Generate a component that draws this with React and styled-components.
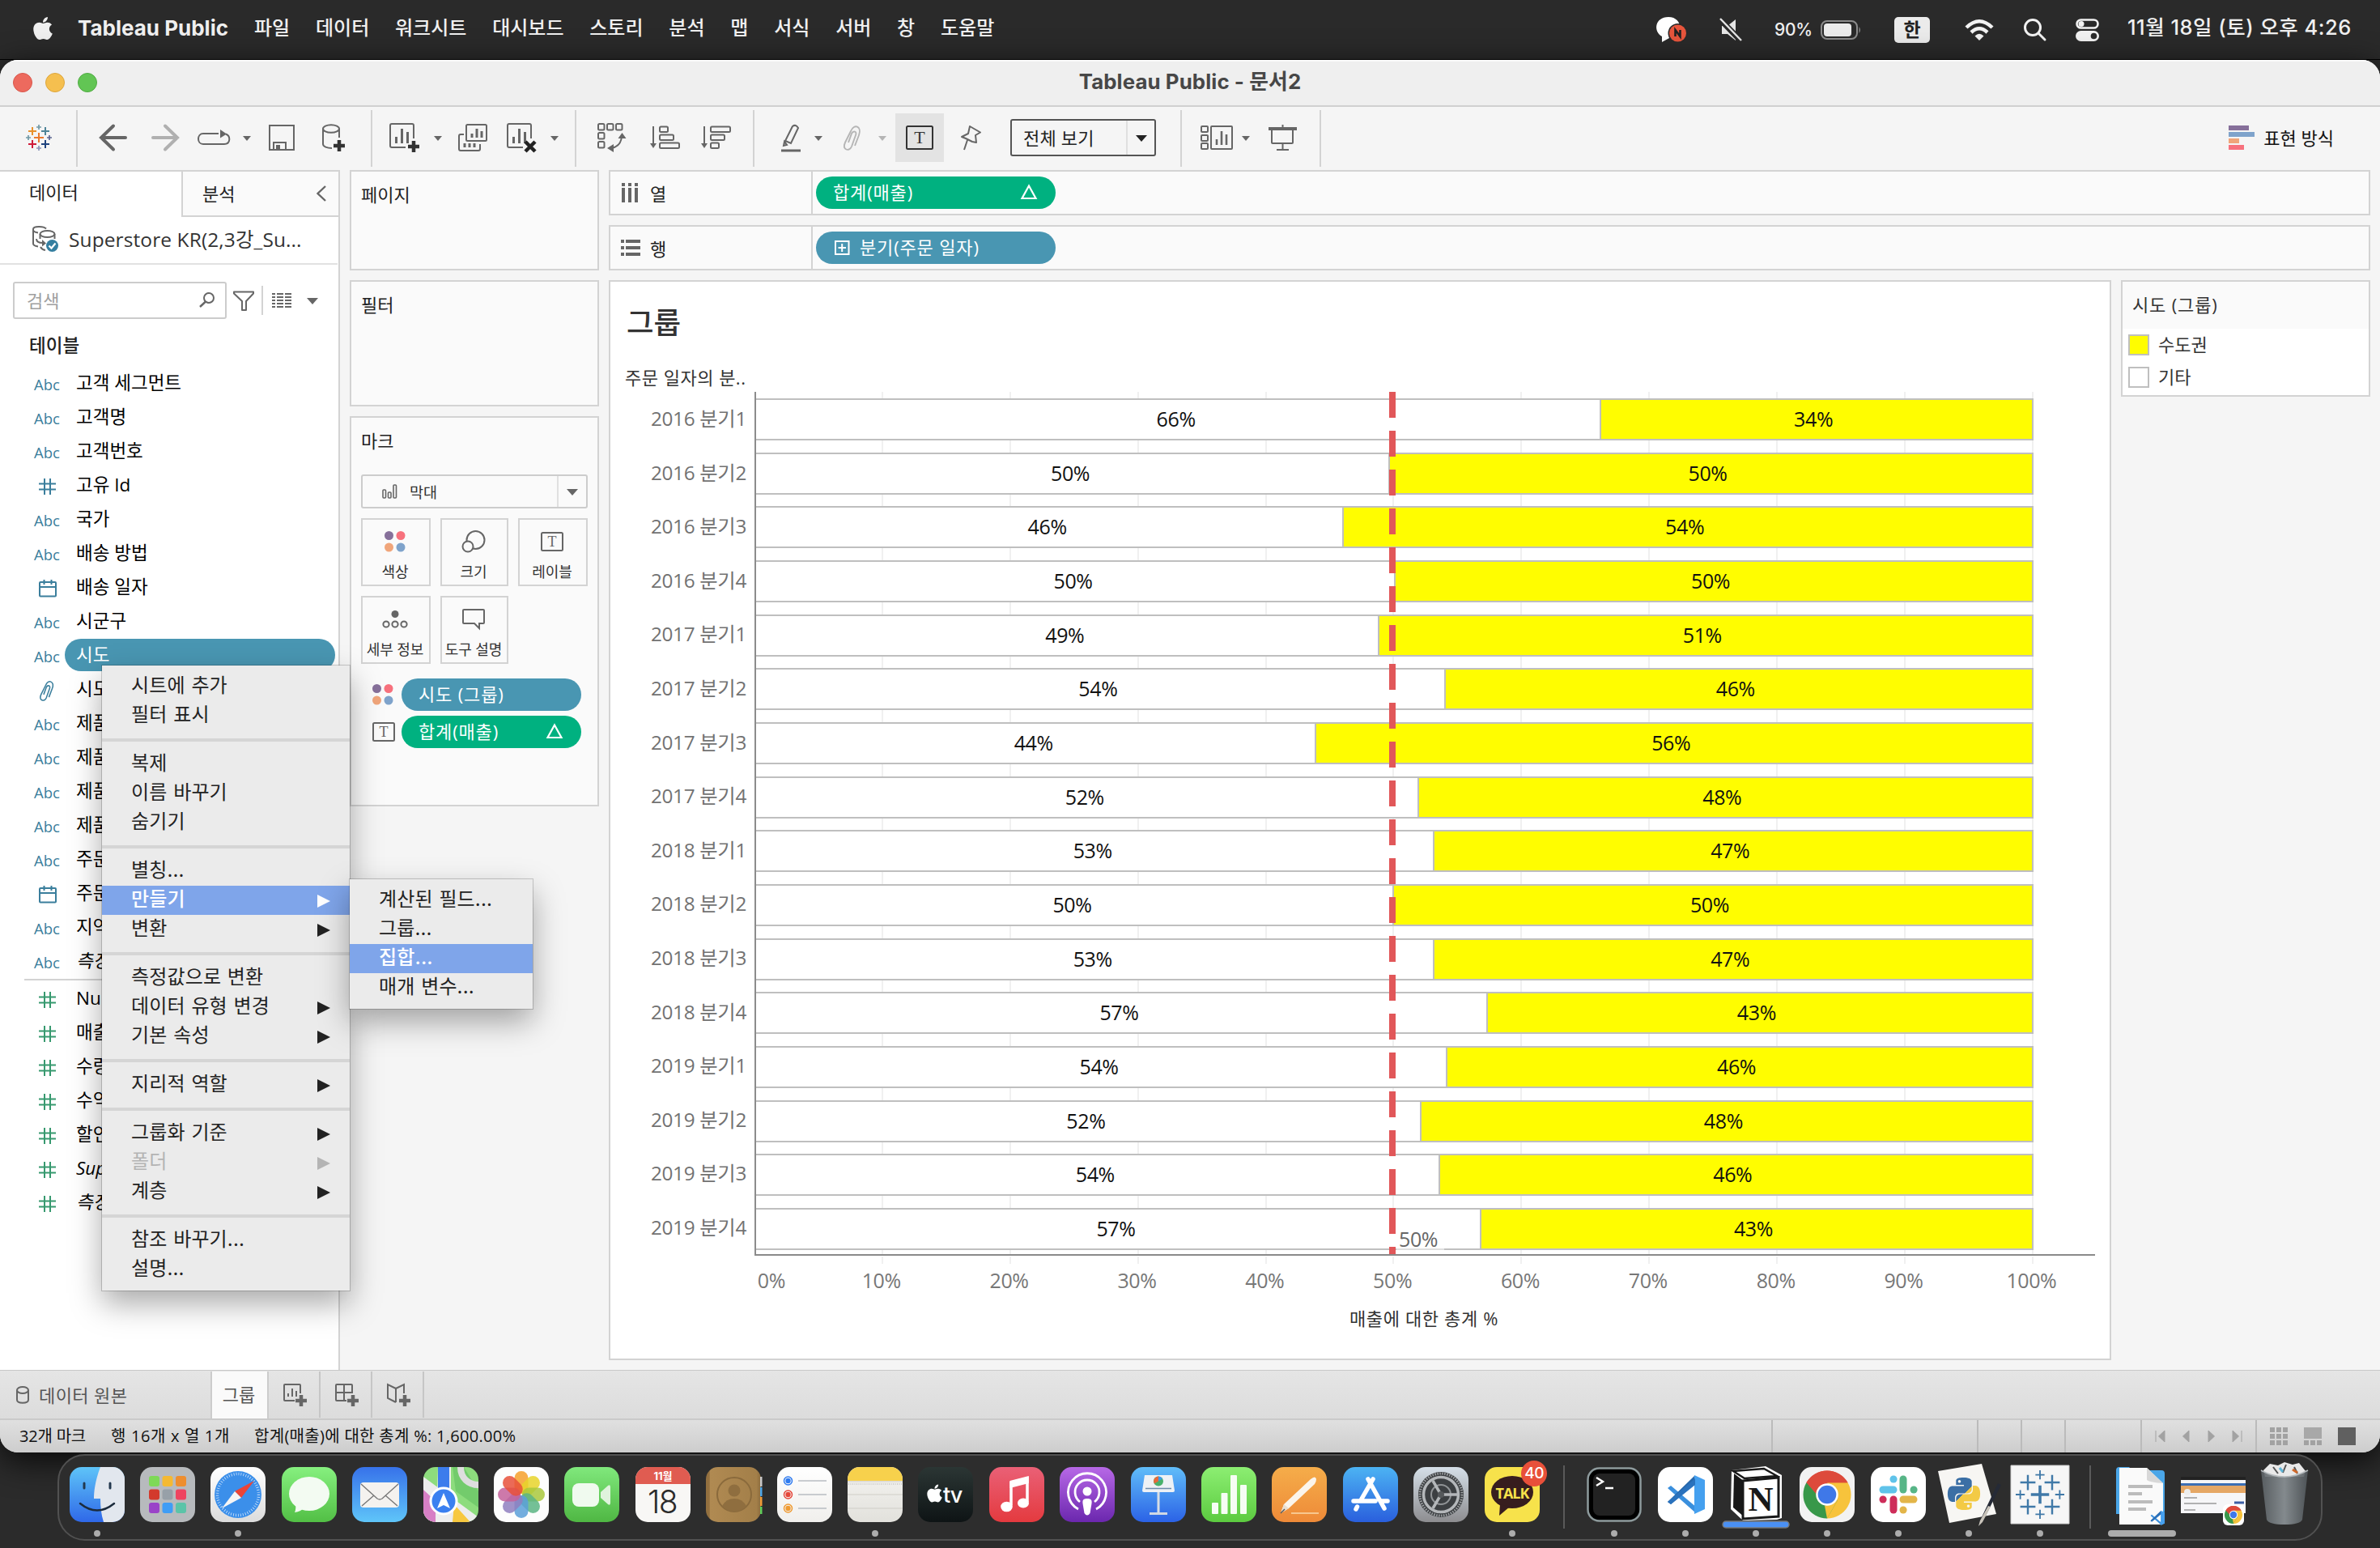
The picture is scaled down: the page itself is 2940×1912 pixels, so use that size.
import React from "react";
import styled, { createGlobalStyle } from "styled-components";
import { FaApple } from "react-icons/fa";
import { SiPython } from "react-icons/si";

const UI = `"Inter", "Noto Sans CJK KR", sans-serif`;
const TB = `"Open Sans", "Noto Sans CJK KR", sans-serif`;
const LINE = "#d3d3d3";
const INK = "#666";
const BLUE = "#4996b2";
const GREEN = "#00b180";

const Global = createGlobalStyle`
  * { box-sizing: border-box; }
  body { margin: 0; background: #2a2a2a; overflow: hidden; }
  svg { display: block; overflow: visible; }
`;

/* ---------- desktop ---------- */
const Desktop = styled.div`
  width: 2940px; height: 1912px; display: flex; flex-direction: column;
  background: #2b2b2b; font-family: ${TB}; overflow: hidden;
`;
const MenuBar = styled.header`
  height: 74px; flex: none; display: flex; align-items: center; padding: 0 32px 4px 40px;
  background: #2a2a2a; border-bottom: 1px solid #000; color: #f0f0f0;
  font-family: ${UI}; font-size: 24px; line-height: 36px; white-space: nowrap;
`;
const AppName = styled.strong`font-weight: 700; font-size: 26px; width: 218px; margin-left: 30px;`;
const Menus = styled.nav`display: flex; gap: 31.8px; font-weight: 500;`;
const MenuStatus = styled.div`margin-left: auto; display: flex; align-items: center; padding-top: 4px;`;
const StatusSlot = styled.div`width: ${p => p.$w}px; margin-right: ${p => p.$gap}px; flex: none;`;
const Percent = styled(StatusSlot)`font-size: 21px; font-weight: 500; letter-spacing: -0.3px;`;
const InputSource = styled(StatusSlot)`
  height: 32px; border-radius: 5px; background: #ebebeb; color: #222; font-size: 23px; font-weight: 700;
  line-height: 32px; text-align: center;
`;
const Clock = styled.span`width: 280px; font-size: 25.5px; font-weight: 500; letter-spacing: 0.5px; line-height: 36px; margin-top: -5px;`;

/* ---------- window ---------- */
const AppWindow = styled.main`
  height: 1720px; flex: none; display: flex; flex-direction: column; overflow: hidden; background: #f5f5f5;
  border-radius: 22px; box-shadow: 0 10px 40px rgba(0,0,0,0.8); position: relative;
`;
const TitleBar = styled.div`
  height: 58px; flex: none; display: flex; align-items: center; padding: 0 16px 2px; background: #efefef;
  border-bottom: 2px solid #d0d0d0; border-top: 2px solid #fafafa;
`;
const Light = styled.i`width: 24px; height: 24px; border-radius: 50%; margin-right: 16px; background: ${p => p.$c}; border: 1px solid ${p => p.$b};`;
const WindowTitle = styled.h1`
  margin: 0 120px 2px 0; flex: 1; text-align: center; font: 700 25.800px/36px ${UI}; color: #474747; letter-spacing: 0.1px;
`;
const Toolbar = styled.div`height: 78px; flex: none; display: flex; align-items: center; padding: 0 57px 2px 32px;`;
const Tool = styled.div`margin-left: ${p => p.$gap || 0}px; width: ${p => p.$w}px; flex: none; display: flex; align-items: center;`;
const ToolRule = styled.i`margin: 2px 0 0 ${p => p.$gap}px; width: 2px; height: 70px; background: ${LINE}; flex: none;`;
const ToolActive = styled(Tool)`height: 60px; background: #e3e3e3; justify-content: center;`;
const CaretShape = styled.i`
  margin: 2px 0 0 ${p => p.$gap || 0}px; flex: none; width: 0; height: 0;
  border: ${p => p.$s || 5}px solid transparent; border-bottom: 0; border-top: ${p => p.$h || 6}px solid ${p => p.$c || INK};
`;
const FitSelect = styled.div`
  margin-left: 35px; width: 180px; height: 46px; border: 2px solid #555; border-radius: 3px; display: flex;
  align-items: center; padding-left: 14px; font-size: 22px; color: #222;
`;
const FitText = styled.span`margin-bottom: 3px; letter-spacing: 0.2px;`;
const SelectArrow = styled.span`
  margin-left: auto; width: ${p => p.$w || 36}px; height: 100%; border-left: 2px solid #e0e0e0; display: flex;
  align-items: center; justify-content: center;
`;
const ShowMe = styled.div`margin-left: auto; display: flex; align-items: center; gap: 11px; font-size: 22px; color: #111; line-height: 30px; padding-bottom: 1px;`;

const Body = styled.div`height: 1482px; flex: none; display: flex; gap: 12px;`;

/* ---------- data pane ---------- */
const Sidebar = styled.aside`
  width: 420px; flex: none; background: #fff; border-right: 2px solid ${LINE}; border-top: 2px solid ${LINE};
  display: flex; flex-direction: column; font-size: 22.5px; color: #000; white-space: nowrap;
`;
const PaneTabs = styled.div`display: flex; height: 56px; flex: none; line-height: 51px; font-size: 22px; color: #222;`;
const DataTab = styled.div`width: 224px; padding-left: 36px;`;
const AnalyticsTab = styled.div`
  flex: 1; background: #fafafa; border-left: 2px solid ${LINE}; border-bottom: 2px solid ${LINE};
  padding: 0 15px 0 24px; display: flex; align-items: center; justify-content: space-between;
`;
const Source = styled.div`
  height: 59px; margin-right: 1px; border-bottom: 2px solid #e2e2e2; display: flex; align-items: center; gap: 13px;
  padding: 0 0 4px 40px; font-size: 24.5px; color: #333; letter-spacing: 0.1px;
`;
const SearchRow = styled.div`display: flex; align-items: center; padding: 21px 0 0 16px; height: 67px;`;
const SearchBox = styled.div`
  width: 264px; height: 46px; border: 2px solid #ccc; border-radius: 3px; padding: 0 13px 2px 15px; display: flex;
  align-items: center; justify-content: space-between; color: #a0a0a0; font-size: 22px;
`;
const SearchRule = styled.i`width: 2px; height: 36px; background: ${LINE}; margin: 0 11px 0 9px;`;
const SchemaHead = styled.div`padding-left: 36px; height: 58px; line-height: 65px; font-size: 22.5px; color: #222; font-weight: 500;`;
const FieldRow = styled.div`height: 42px; flex: none; display: flex; align-items: center; padding-left: 42px;`;
const TypeCell = styled.span`
  width: 38px; height: 26px; padding-top: 3px; display: flex; align-items: center; font-size: 18.5px; color: #3a7e9c;
  svg { margin-left: 6px; }
`;
const FieldName = styled.span`
  margin-right: 4px; height: 40px; line-height: 39px; padding-left: 14px; flex: 1; border-radius: 20px; overflow: hidden;
  background: ${p => p.$on ? BLUE : "transparent"}; color: ${p => p.$on ? "#fff" : "#000"};
  font-style: ${p => p.$italic ? "italic" : "normal"};
`;
const FieldRule = styled.i`height: 2px; margin: 1px 0 1px 30px; background: ${LINE}; flex: none;`;

/* ---------- cards ---------- */
const Cards = styled.div`width: 308px; flex: none; display: flex; flex-direction: column; gap: 12px;`;
const Card = styled.section`
  height: ${p => p.$h}px; flex: none; background: #fafafa; border: 2px solid ${LINE}; padding: 11px 12px 12px;
  font-size: 22px; color: #333;
`;
const CardTitle = styled.h2`margin: 0; font: 400 22px/34px ${TB}; color: #222;`;
const MarkSelect = styled.div`
  margin-top: 25px; height: 42px; border: 2px solid #ccc; border-radius: 3px; display: flex; align-items: center;
  padding-left: 24px; font-size: 18.5px; background: #fafafa;
  svg { margin-right: 16px; }
`;
const MarkGrid = styled.div`display: grid; grid-template-columns: 86px 84px 86px; gap: 12px; margin-top: 12px; height: 180px;`;
const MarkButton = styled.div`
  height: 84px; border: 2px solid ${LINE}; display: flex; flex-direction: column; align-items: center;
  font-size: 18px; line-height: 26px; padding: 7px 2px 0 0; gap: 4px; white-space: nowrap; color: #333;
  letter-spacing: -0.1px;
`;
const MarkIconBox = styled.span`height: 40px; display: flex; align-items: center;`;
const MarkPills = styled.div`margin-top: 18px; display: flex; flex-direction: column; gap: 6px;`;
const MarkPillRow = styled.div`display: flex; align-items: center; justify-content: space-between; padding: 0 8px 0 14px;`;
const Pill = styled.div`
  width: ${p => p.$w}px; height: 40px; border-radius: 20px; background: ${p => p.$c}; color: #fff; font-size: 22px;
  line-height: 36px; padding: 0 23px 2px 21px; display: flex; align-items: center; white-space: nowrap; letter-spacing: 0.85px;
  svg:last-child { margin-left: auto; }
`;

/* ---------- shelves & view ---------- */
const Main = styled.div`width: 2176px; flex: none; display: flex; flex-direction: column; gap: 12px;`;
const Shelf = styled.div`height: 56px; flex: none; border: 2px solid ${LINE}; background: #fafafa; display: flex; align-items: center;`;
const ShelfLabel = styled.div`
  width: 250px; height: 100%; border-right: 2px solid ${LINE}; display: flex; align-items: center; padding: 0 0 1px 13px;
  font-size: 22px; color: #222; margin-right: 4px;
`;
const ShelfIcon = styled.span`width: 36px;`;
const PillIcon = styled.span`margin: 1px 12px 0 2px;`;
const Stage = styled.div`display: flex; gap: 12px; height: 1334px; align-items: flex-start;`;
const View = styled.section`width: 1856px; height: 1334px; background: #fff; border: 2px solid ${LINE}; display: flex; flex-direction: column;`;
const SheetTitle = styled.h2`margin: 25px 0 0 20px; font: 500 36.500px/50px ${TB}; color: #333; height: 76px;`;
const RowHead = styled.div`height: 35px; padding-left: 18px; line-height: 34px; font-size: 22px; color: #333; white-space: nowrap; letter-spacing: 0.5px;`;
const ChartArea = styled.div`display: flex; height: 1067px;`;
const RowLabels = styled.div`width: 178px; padding-right: 10px; text-align: right; font-size: 24.300px; color: #727272; white-space: nowrap; letter-spacing: -0.3px;`;
const RowLabel = styled.div`height: 66.600px; line-height: 66px;`;
const Plot = styled.div`width: 1656px; position: relative; border-left: 2px solid #8c8c8c; border-bottom: 2px solid #8a8a8a; overflow: hidden;`;
const Gridlines = styled.div`
  position: absolute; inset: 0 auto 0 155px; width: 1423px;
  background: repeating-linear-gradient(90deg, #f0f0f0 0 2px, transparent 2px 157.85px);
`;
const Bars = styled.div`position: relative; width: 1578px;`;
const BarRow = styled.div`height: 66.667px; padding-top: 8px; display: flex; align-items: flex-start;`;
const Bar = styled.div`
  height: 52px; border: 2px solid #bfbfbf; border-left-width: ${p => p.$hi ? 2 : 0}px; border-right-width: ${p => p.$hi ? 2 : 0}px;
  background: ${p => p.$hi ? "#fffd00" : "#fff"}; text-align: center; line-height: 46px; font-size: 25px; color: #111;
  letter-spacing: -0.4px; padding-right: ${p => p.$hi ? 8 : 5}px;
`;
const RefLine = styled.i`
  position: absolute; left: 782px; top: 0; bottom: 0; width: 8px;
  background: repeating-linear-gradient(180deg, #e15759 0 32px, transparent 32px 48px);
`;
const RefLabel = styled.span`
  position: absolute; left: 791px; top: 1028px; width: 59px; height: 34px; padding-left: 3px; line-height: 36px;
  background: rgba(255,255,255,0.5); font-size: 25px; color: #666; letter-spacing: -0.4px;
`;
const Ticks = styled.div`
  height: 9px; margin: 1px 0 0 335px; width: 1423px;
  background: repeating-linear-gradient(90deg, #f0f0f0 0 2px, transparent 2px 157.85px);
`;
const AxisLabels = styled.div`display: flex; margin: 1px 0 0 98px; font-size: 25px; line-height: 38px; color: #777; letter-spacing: -0.4px;`;
const AxisLabel = styled.span`width: 157.85px; text-align: center; flex: none; padding-left: ${p => p.$shift || 0}px;`;
const AxisTitle = styled.div`width: 1656px; margin: 11px 0 0 177px; text-align: center; line-height: 34px; font-size: 22px; color: #333; letter-spacing: 0.65px;`;
const Legend = styled.section`width: 308px; height: 144px; background: #fff; border: 2px solid ${LINE}; font-size: 22px; color: #333;`;
const LegendHead = styled.div`height: 58px; background: #fafafa; padding-left: 12px; line-height: 57px; letter-spacing: 0.85px;`;
const LegendItem = styled.div`height: 40px; display: flex; align-items: center; gap: 11px; padding: 0 0 0 7px; line-height: 36px;`;
const Swatch = styled.i`width: 26px; height: 26px; border: 2px solid #bfbfbf; background: ${p => p.$c};`;
const LegendName = styled.span`padding-bottom: 2px;`;

/* ---------- footer ---------- */
const SheetTabs = styled.div`
  height: 60px; flex: none; border-top: 1px solid #c8c8c8; background: linear-gradient(#e5e5e5, #dcdcdc);
  display: flex; padding-top: 1px; font-size: 22px; color: #555; line-height: 56px;
`;
const SourceTab = styled.div`width: 260px; padding-left: 20px; display: flex; align-items: center; gap: 12px; letter-spacing: 0.4px;`;
const SheetTab = styled.div`width: 72px; text-align: center; background: #fafafa; border: 2px solid #ccc; border-width: 0 2px; line-height: 57px; padding-right: 2px;`;
const NewTab = styled.div`width: 64px; border-right: 2px solid #c6c6c6; display: flex; align-items: center; justify-content: center; margin-bottom: 1px; padding-left: 3px;`;
const StatusBar = styled.footer`
  height: 42px; flex: none; border-top: 2px solid #cacaca; background: linear-gradient(#e0e0e0, #cdcdcd);
  display: flex; align-items: center; padding-left: 24px; font-size: 20px; color: #111; white-space: nowrap;
`;
const StatusText = styled.span`width: ${p => p.$w}px; flex: none; letter-spacing: ${p => p.$ls || -0.2}px; line-height: 38px;`;
const StatusCell = styled.div`
  width: ${p => p.$w}px; height: 40px; border-left: 2px solid #bbb; display: flex; align-items: center; flex: none;
  ${p => p.$first ? "margin-left: auto;" : ""} padding: 0 ${p => p.$pad || 0}px; justify-content: space-between;
`;

/* ---------- menus ---------- */
const Popup = styled.div`
  position: absolute; left: ${p => p.$x}px; top: ${p => p.$y}px; width: ${p => p.$w}px; padding: 8px 0; background: #ebebeb;
  box-shadow: 0 0 0 1px rgba(0,0,0,0.18), 0 16px 36px rgba(0,0,0,0.34); font: 400 24px/32px ${UI}; color: #222; z-index: 2;
  letter-spacing: 0.15px; word-spacing: 0.8px;
`;
const PopupItem = styled.div`
  height: 36px; padding: 0 24px 2px 36px; display: flex; justify-content: space-between; align-items: center; white-space: nowrap;
  background: ${p => p.$on ? "#7fa5ea" : "transparent"}; color: ${p => p.$on ? "#fff" : p.$off ? "#b4b4b4" : "#222"};
  font-weight: ${p => p.$on ? 500 : 400};
`;
const PopupArrow = styled.i`
  width: 0; height: 0; border: 8px solid transparent; border-right: 0; border-left: 16px solid currentColor; margin-top: 3px;
`;
const PopupRule = styled.div`height: 4px; margin: 10px 0; background: #d5d5d5;`;

/* ---------- dock ---------- */
const Dock = styled.nav`
  margin: 2px 0 0 71px; width: 2798px; height: 107px; border-radius: 34px; border: 2px solid #515151; background: #2d2d2d;
  display: flex; padding-left: 3px; position: relative; flex: none;
`;
const DockItem = styled.div`width: ${p => p.$w || 87.4}px; flex: none; display: flex; flex-direction: column; align-items: center; padding-top: 14px; position: relative;`;
const DockTile = styled.div`width: 68px; height: 68px; border-radius: ${p => p.$sq ? 0 : 15}px; overflow: ${p => p.$free ? "visible" : "hidden"}; background: ${p => p.$bg || "none"};`;
const Dot = styled.i`width: ${p => p.$w || 8}px; height: 8px; border-radius: 4px; background: #acacac; margin-top: 10px;`;
const DockRule = styled.i`width: 2px; height: 78px; margin: 12px ${p => p.$r}px 0 ${p => p.$l}px; background: #5a5a5a; flex: none;`;
const Badge = styled.span`
  position: absolute; right: 0; top: 6px; width: 32px; height: 32px; border-radius: 50%; background: #e8503a; color: #fff;
  font: 500 19px/32px ${UI}; text-align: center; letter-spacing: -0.5px;
`;

/* ---------- icons ---------- */
const Svg = ({ w, h, children, ...r }) => (
  <svg width={w} height={h} viewBox={`0 0 ${w} ${h}`} fill="none" stroke={INK} strokeWidth="2" {...r}>{children}</svg>
);
const PLUSES = [
  [16, 16, 6, "#eb7a2e"], [8, 8, 5, "#e8912d"], [24, 8, 5, "#4f8598"], [8, 24, 5, "#cf1c3a"], [24, 24, 5, "#1f447e"],
  [16, 3, 3, "#7099a6"], [3, 16, 3, "#7099a6"], [29, 16, 3, "#5b6591"], [16, 29, 3, "#8c95b8"],
];
const Logo = ({ mono, size = 32 }) => (
  <svg width={size} height={size} viewBox="0 0 32 32" fill="none">
    {PLUSES.map(([x, y, r, c], i) => (
      <path key={i} d={`M${x - r} ${y}h${2 * r}M${x} ${y - r}v${2 * r}`} stroke={mono || c} strokeWidth={mono ? (r > 5 ? 1.900 : r > 3 ? 1.300 : 1) : r < 4 ? 1.7 : 2} />
    ))}
  </svg>
);
const Arrow = ({ flip }) => (
  <Svg w={36} h={34} stroke={flip ? "#b0b0b0" : INK} strokeWidth="4" strokeLinecap="round" transform={flip ? "scale(-1 1)" : undefined}>
    <path d="M18 2.500 3 17 18 31.500M3 17h30" />
  </Svg>
);
const Redo = () => (
  <Svg w={40} h={20}><path d="M26 5H7C-1 5-1 18 7 18H33C41 18 41 8 35 5.500" /><path d="M28 0l8 5.500-8 5z" fill={INK} stroke="none" /></Svg>
);
const Save = () => <Svg w={32} h={32}><path d="M1 1h30v30H1zM6 31V22h15v9" /><path d="M9 25h5v6H9z" fill={INK} stroke="none" /></Svg>;
const DbPlus = () => (
  <Svg w={28} h={34}><ellipse cx="11" cy="6" rx="10" ry="4.800" /><path d="M1 6v19c0 3 5 5 11 5M21 6v11" /><path d="M21 20v14M14 27h14" stroke="#333" strokeWidth="4.500" /></Svg>
);
const BarsIn = () => <path d="M8.500 25v-8M15.500 25V7M22.500 25V11" strokeWidth="3" />;
const NewSheet = () => (
  <Svg w={38} h={36}><path d="M20 30H3q-2 0-2-2V3q0-2 2-2h25q2 0 2 2v16" /><BarsIn /><path d="M30 22v14M23 29h14" stroke="#333" strokeWidth="4.500" /></Svg>
);
const ClearSheet = () => (
  <Svg w={36} h={36}><path d="M20 30H3q-2 0-2-2V3q0-2 2-2h25q2 0 2 2v16" /><BarsIn /><path d="M23 23l12 12M35 23l-12 12" stroke="#222" strokeWidth="4.500" /></Svg>
);
const DupSheet = () => (
  <Svg w={36} h={34}><rect x="10" y="1" width="25" height="20" rx="1.500" /><path d="M17 17v-5M23 17V6M29 17v-8" strokeWidth="3" /><path d="M7 13H3q-2 0-2 2v16q0 2 2 2h22q2 0 2-2v-6" /><path d="M8 29v-5M14 29v-5M20 29v-5" strokeWidth="3" /></Svg>
);
const Swap = () => (
  <Svg w={36} h={36}>
    {[[1, 1], [12, 1], [23, 1], [1, 12], [1, 23]].map(([x, y]) => <rect key={x + "-" + y} x={x} y={y} width="7.500" height="7.500" rx="1.500" />)}
    <path d="M30 17c-1 8-6 13-13 14" /><path d="M25.500 19l5-7 5 7zM20 26l-8 5 8 5z" fill={INK} stroke="none" />
  </Svg>
);
const Sort = ({ desc }) => (
  <Svg w={37} h={30}>
    <path d="M4 1v23" /><path d="M0 22h8l-4 6z" fill={INK} stroke="none" />
    {(desc ? [24, 17, 10] : [10, 17, 24]).map((w, i) => <rect key={i} x="12" y={1.500 + i * 10} width={w} height="6.500" rx="1.500" />)}
  </Svg>
);
const Pen = () => (
  <Svg w={28} h={34}><path d="M6 21 15 3q4-3 7 2L13 24zM5 22l-1 5 4-1z" /><path d="M1 33h24" strokeWidth="3" /></Svg>
);
const Clip = ({ c = "#b5b5b5", w = 24, h = 32 }) => (
  <svg width={w} height={h} viewBox="0 0 24 32" fill="none" stroke={c} strokeWidth="1.900"><path d="M15 26l5-13c4-11-6-15-10-5L3 22c-4 9 5 12 8 5l5-14c2-5-3-6-5-2L7 22" /></svg>
);
const TBox = ({ w = 34, h = 30, c = INK, f = 22 }) => (
  <Svg w={w} h={h} stroke={c}><rect x="1" y="1" width={w - 2} height={h - 2} rx="1.500" /><text x={w / 2} y={h / 2 + f * 0.33} textAnchor="middle" fontFamily="Liberation Serif" fontSize={f} fill={c} stroke="none">T</text></Svg>
);
const Pin = () => <Svg w={26} h={32}><path d="M11 2 24 9.500 18 13l1 9-5-1-8-4-5-2 8-4zM8 19 4 31" strokeLinejoin="round" /></Svg>;
const Cards3 = () => (
  <Svg w={40} h={30}>{[1, 12, 22].map(y => <rect key={y} x="1" y={y} width="8" height="7" rx="1" />)}<rect x="13" y="1" width="26" height="28" rx="1" /><path d="M20 24v-7M26 24V7M32 24V11" strokeWidth="2.600" /></Svg>
);
const Present = () => <Svg w={35} h={32}><path d="M0 5h35" strokeWidth="4" /><path d="M4 7v15q0 1 1 1h24q1 0 1-1V7M17.500 0v4M17.500 23v7M10 31h15" /></Svg>;
const Hash = ({ c }) => <Svg w={21} h={20} stroke={c} strokeWidth="2"><path d="M7 0v20M14 0v20M0 6.500h21M0 13.500h21" /></Svg>;
const Cal = () => <Svg w={22} h={22} stroke="#3a7e9c"><rect x="1" y="3" width="20" height="17.500" rx="1" /><path d="M1 9h20M6.500 0v6M15.500 0v6" /></Svg>;
const Delta = () => <Svg w={20} h={18} stroke="#fff" strokeWidth="2.200"><path d="M10 1.500 18.500 17h-17z" /></Svg>;
const Dots4 = () => (
  <Svg w={26} h={26} stroke="none"><circle cx="5.500" cy="5.500" r="5.500" fill="#86709a" /><circle cx="20" cy="5.500" r="5.500" fill="#f7717d" /><circle cx="5.500" cy="20" r="5.500" fill="#f0a57a" /><circle cx="20" cy="20" r="5.500" fill="#7fa3cb" /></Svg>
);
const SizeIcon = () => <Svg w={30} h={28}><circle cx="17.500" cy="12" r="11" /><circle cx="8" cy="20" r="6.500" fill="#fafafa" /></Svg>;
const Detail = () => <Svg w={32} h={22}><circle cx="16" cy="4.500" r="4.500" fill={INK} stroke="none" />{[5, 16, 27].map(x => <circle key={x} cx={x} cy="17" r="3.600" />)}</Svg>;
const Tip = () => <Svg w={28} h={26}><path d="M2 1h24q1 0 1 1v15q0 1-1 1h-5v6l-6-6H2q-1 0-1-1V2q0-1 1-1z" /></Svg>;
const SourceIcon = () => (
  <Svg w={32} h={32}>
    <path d="M17 3.500C14 0 1 0 1 4v18c0 2 3 3 6 3.500M1 5c0 2 3 3 6 3.500" /><ellipse cx="18.500" cy="10" rx="9" ry="4" /><path d="M9.500 10v6M27.500 10v6M5 16c0 4 3 5 8 5M10 26c1 2 3 3.500 6 4" />
    <path d="M12 17l5 4.500-5 4z" fill={INK} stroke="none" /><circle cx="24.500" cy="24.500" r="7.500" fill="#357fa0" stroke="none" /><path d="M20.500 24.500l3 3 5-6" stroke="#fff" strokeWidth="2.200" />
  </Svg>
);
const Lens = () => <Svg w={19} h={19}><circle cx="12" cy="7" r="6" /><path d="M8 11.500 1 18" strokeWidth="2.400" /></Svg>;
const Funnel = () => <Svg w={26} h={25}><path d="M1 1.500h24v2L16 13v11h-5V13L1 3.500z" strokeLinejoin="round" /></Svg>;
const ListGrid = () => (
  <Svg w={24} h={19}>{[1, 5, 9, 13, 17].map(y => <path key={y} d={`M0 ${y}h4M6 ${y}h8M16 ${y}h8`} />)}</Svg>
);
const ColsIcon = () => <Svg w={22} h={24} strokeWidth="4"><path d="M3 6v18M11 6v18M19 6v18M3 0v4M11 0v4M19 0v4" /></Svg>;
const RowsIcon = () => <Svg w={24} h={20} strokeWidth="4"><path d="M6 2h18M6 10h18M6 18h18M0 2h4M0 10h4M0 18h4" /></Svg>;
const ShowMeIcon = () => (
  <Svg w={32} h={30} stroke="none"><path d="M0 0h25v6H0z" fill="#86709a" /><path d="M0 8h32v6H0z" fill="#7fa3cb" /><path d="M0 16h13v6H0z" fill="#f0a57a" /><path d="M0 24h19v6H0z" fill="#f7717d" /></Svg>
);
const Expand = () => <Svg w={19} h={18} stroke="#fff"><rect x="1" y="1" width="16.500" height="16" /><path d="M9.200 4v10M4.500 9h9.500" /></Svg>;
const Plus = ({ x, y }) => <path d={`M${x} ${y - 7}v14M${x - 7} ${y}h14`} strokeWidth="4.500" />;

/* dock artwork, drawn on a 68 unit tile */
const Art = ({ children, ...r }) => <svg width="68" height="68" viewBox="0 0 68 68" fill="none" {...r}>{children}</svg>;
const GRID_COLORS = ["#7ed957", "#f4b932", "#ee8e2f", "#d33a2c", "#97a0a8", "#ee4460", "#9a43c8", "#3f9df5", "#5bc4a8"];
const PETALS = ["#f6a02c", "#e8d32a", "#a9c83c", "#5cb584", "#5a9fd8", "#8f7fc0", "#c4629b", "#e8503a"];

const ChromeArt = ({ r = 30 }) => (
  <g transform={`translate(34 34) scale(${r / 30})`}>
    <path d="M0 0-26-15A30 30 0 0 1 26-15z" fill="#dd4a3b" />
    <path d="M0 0 26-15A30 30 0 0 1 0 30z" fill="#f7c33c" /><path d="M0 0 0 30A30 30 0 0 1-26-15z" fill="#38984a" />
    <path d="M-13 7.500-26-15 0-14zM13 7.500 0 30-10 10z" fill="#38984a" /><path d="M13 7.500 0 30-3 14z" fill="#f7c33c" /><path d="M0-15H26L12 2z" fill="#f7c33c" />
    <path d="M-26-15A30 30 0 0 1 26-15H0L-13 0z" fill="#dd4a3b" />
    <circle r="14" fill="#fff" /><circle r="11.500" fill="#3f78e8" />
  </g>
);
const CodeArt = () => (
  <g><path d="M12 26 16 23 48 50 47 57z" fill="#3a8fdd" /><path d="M12 43 16 46 48 19 45 11z" fill="#2667ab" /><path d="M45 10 58 16V52L45 58V22" fill="#45a0ef" /><path d="M12 43 16 46 46 22V14z" fill="#2a72bd" /></g>
);

const DOCK_LEFT = [
  { id: "finder", run: 1, bg: "linear-gradient(#5ec4f8,#2f68e8)", art: <Art><path d="M38 0C31 18 30 32 30 39H38c0 10 1 20 4 29H68V0z" fill="#e2e7ee" /><path d="M18 20v6M50 20v6" stroke="#23384e" strokeWidth="3" strokeLinecap="round" /><path d="M13 45q21 17 42 0" stroke="#1c2b3c" strokeWidth="2.500" strokeLinecap="round" /></Art> },
  { id: "launchpad", bg: "#b7babd", art: <Art>{GRID_COLORS.map((c, i) => <rect key={c} x={11 + (i % 3) * 16.500} y={11 + Math.floor(i / 3) * 16.500} width="13" height="13" rx="3" fill={c} />)}</Art> },
  { id: "safari", run: 1, bg: "linear-gradient(#fff,#dcdcdc)", art: <Art><circle cx="34" cy="34" r="29" fill="#3b8fea" /><circle cx="34" cy="34" r="25.500" stroke="#cfe4fb" strokeWidth="3.500" strokeDasharray="0.8 2.200" /><path d="M54 17 38 38 30 30z" fill="#ea4437" /><path d="M14 51 38 38 30 30z" fill="#f5f5f5" /></Art> },
  { id: "messages", bg: "linear-gradient(#86f07f,#52bf45)", art: <Art><ellipse cx="34" cy="33" rx="25" ry="21" fill="#f3fbf2" /><path d="M17 44q1 8-1 12 8-1 12-6z" fill="#f3fbf2" /></Art> },
  { id: "mail", bg: "linear-gradient(#3772ea,#5fc5f9)", art: <Art><rect x="10" y="19" width="48" height="31" rx="4" fill="#f4f2ef" /><path d="M11 21 31 39q3 2 6 0L57 21M12 48 27 35M56 48 41 35" stroke="#777" strokeWidth="1.400" /></Art> },
  { id: "maps", bg: "#8ddc7d", art: <Art><path d="M0 12 68 62V68H0z" fill="#ececec" /><path d="M0 28v40h15V42z" fill="#d77fc5" /><path d="M38 46 58 68H36z" fill="#f7c83f" /><path d="M40 30 68 50V30L50 0H36z" fill="#73cb6c" /><path d="M18 0h16v68H16z" fill="#eee" /><path d="M18 0h14v32H18z" fill="#3c7cec" /><path d="M46 0c0 14 10 22 22 22" stroke="#dedede" strokeWidth="8" /><circle cx="25" cy="42" r="16" fill="#3b80f0" stroke="#fff" strokeWidth="3" /><path d="M25 32 33 51 25 47 17 51z" fill="#fff" /></Art> },
  { id: "photos", bg: "#fdfdfd", art: <Art>{PETALS.map((c, i) => <rect key={c} x="25.500" y="5" width="17" height="28" rx="8.500" fill={c} opacity="0.85" transform={`rotate(${i * 45} 34 34)`} />)}</Art> },
  { id: "facetime", bg: "linear-gradient(#80e87c,#4fb743)", art: <Art><rect x="10" y="20" width="33" height="29" rx="8" fill="#f0faef" /><path d="M45 31 54 23q3-2 3 2v19q0 4-3 2l-9-8z" fill="#dff3dc" /></Art> },
  { id: "calendar", bg: "#f8f7f5", art: <Art><path d="M0 0h68v21H0z" fill="#e05c51" /><text x="34" y="16" textAnchor="middle" fontFamily="Inter, 'Noto Sans CJK KR'" fontSize="13" fontWeight="700" fill="#fff">11월</text><text x="33" y="57" textAnchor="middle" fontFamily="Inter" fontSize="39" fontWeight="300" letterSpacing="-1.500" fill="#2a2a2a">18</text></Art> },
  { id: "contacts", bg: "linear-gradient(90deg,#93703f 0 6%,#b08a52 8%,#a37f49 92%,#8a6a3c)", free: 1, art: <Art><path d="M67 12h2.500v12H67z" fill="#c9c9c9" /><path d="M67 25h2.500v11H67z" fill="#4ea6e8" /><path d="M67 37h2.500v11H67z" fill="#f09a37" /><path d="M67 49h2.500v9H67z" fill="#5fcf5a" /><circle cx="35" cy="34" r="21" stroke="#8a6a3c" strokeWidth="2" /><circle cx="35" cy="29" r="7.500" fill="#8f6e3f" /><path d="M20 48q5-9 15-9t15 9q-6 7-15 7t-15-7z" fill="#8f6e3f" /></Art> },
  { id: "reminders", bg: "linear-gradient(#fff,#f0efec)", art: <Art>{["#2f7bf0", "#e4473a", "#ef9b33"].map((c, i) => <g key={c}><circle cx="13.500" cy={17 + i * 17} r="5" stroke={c} strokeWidth="1.500" /><circle cx="13.500" cy={17 + i * 17} r="3.200" fill={c} /><path d={`M26 ${17 + i * 17}h35`} stroke="#b9bcc2" strokeWidth="1.500" /></g>)}</Art> },
  { id: "notes", run: 1, bg: "linear-gradient(#f5f4f1,#e2e1dc)", art: <Art><path d="M0 0h68v17H0z" fill="#f7d14c" /><path d="M0 18h68M0 34h68M0 51h68" stroke="#cfcdc8" strokeWidth="1.200" /><path d="M1 21h66" stroke="#aaa" strokeDasharray="1 1.500" /></Art> },
  { id: "tv", bg: "linear-gradient(#2b3634,#0e1415)", art: <Art><FaApple x="8" y="20" width="22" height="25" size={25} color="#fff" /><text x="31" y="44" fontFamily="Inter" fontSize="27" fontWeight="500" letterSpacing="-1" fill="#fff">tv</text></Art> },
  { id: "music", bg: "linear-gradient(#ea6076,#e43a3f)", art: <Art><path d="M27 47V19L47 14V43" stroke="#fff" strokeWidth="3.500" /><path d="M25.500 17 48.800 11V20L25.500 26z" fill="#fff" /><ellipse cx="21.500" cy="49" rx="7.300" ry="6.300" fill="#fff" /><ellipse cx="42" cy="44.500" rx="7" ry="6" fill="#fff" /></Art> },
  { id: "podcasts", bg: "linear-gradient(#b768e6,#6b27ae)", art: <Art stroke="#fff" strokeWidth="2.800"><path d="M23 52A23.500 23.500 0 1 1 45 52M25 43A15 15 0 1 1 43 43" /><circle cx="34" cy="30" r="5.500" fill="#fff" stroke="none" /><path d="M34 39c5 0 6 2 5.500 6l-2 12q-3.500 5-7 0l-2-12c-.5-4 .5-6 5.500-6z" fill="#fff" stroke="none" /></Art> },
  { id: "keynote", bg: "linear-gradient(#60bdf9,#2b62e6)", art: <Art><path d="M32.500 30h3v27h-3z" fill="#d8dde4" /><path d="M23 56h22v3H23z" fill="#d0d8e4" /><path d="M17 10h34l3 19q0 2-2 2H16q-2 0-2-2z" fill="#eef1f5" /><path d="M18 26.500h32" stroke="#6e8cab" strokeWidth="1.500" /><circle cx="34" cy="17.500" r="6" fill="#49b16b" /><path d="M34 17.500V11.500a6 6 0 0 0-5 9z" fill="#e8683a" /><path d="M34 17.500V11.500a6 6 0 0 1 5 3z" fill="#3e9bea" /></Art> },
  { id: "numbers", bg: "linear-gradient(#8cee72,#5ccb40)", art: <Art>{[[13, 44, 14], [24.500, 32, 26], [36, 10, 48], [48, 22, 36]].map(([x, y, h]) => <rect key={x} x={x} y={y} width="8" height={h} rx="1" fill="#f6fdf4" />)}</Art> },
  { id: "pages", bg: "linear-gradient(#f5ad4a,#ee8a38)", art: <Art><path d="M11 57 15 46 48 15q6-5 7 0 0 3-2 6L21 51z" fill="#fbf5ec" /><path d="M11 57 15 46 21 51z" fill="#e9ded0" /><path d="M11 57l5-5" stroke="#555" strokeWidth="1.500" /><path d="M24 57h34" stroke="#f8c78f" strokeWidth="2" /></Art> },
  { id: "appstore", bg: "linear-gradient(#4cb3f3,#2a5fdd)", art: <Art stroke="#fff" strokeWidth="5.500" strokeLinecap="round"><path d="M37 15 22 41M31 15 51 51M13 42H40M48 42h7M17.500 49l-1.500 3" /></Art> },
  { id: "settings", bg: "linear-gradient(#d5dfe8,#8d8d90)", art: <Art><circle cx="34" cy="34" r="28" fill="#3c3f42" /><circle cx="34" cy="34" r="26" stroke="#9da0a3" strokeWidth="3" strokeDasharray="1.500 1.500" /><circle cx="34" cy="34" r="21.500" stroke="#b4b7ba" strokeWidth="3.500" /><circle cx="34" cy="34" r="12" stroke="#909396" strokeWidth="2" /><path d="M34 34h20M34 34 24 17M34 34 24 51" stroke="#b4b7ba" strokeWidth="3.500" /><circle cx="34" cy="34" r="4" fill="#55585b" /></Art> },
  { id: "talk", run: 1, bg: "#f7e24b", badge: "40", art: <Art><ellipse cx="34" cy="31" rx="26" ry="20" fill="#371d1e" /><path d="M19 46 18 60 31 49z" fill="#371d1e" /><text x="34" y="38.500" textAnchor="middle" fontFamily="Open Sans" fontSize="18" fontWeight="700" letterSpacing="-1" fill="#f7e24b">TALK</text></Art> },
];
const DOCK_MID = [
  { id: "terminal", run: 1, free: 1, art: <Art><rect x="1.500" y="1.500" width="65" height="65" rx="14" fill="#000" stroke="#8d9a9c" strokeWidth="2.500" /><rect x="8" y="8" width="52" height="52" rx="8" fill="#222" /><path d="M12 13l8 5-8 5M23 26h10" stroke="#fff" strokeWidth="2.400" /></Art> },
  { id: "code", run: 1, bg: "#fff", art: <Art><CodeArt /></Art> },
  { id: "notion", run: 1, free: 1, art: <Art><path d="M4 4 46-1 66 10V63L60 65 18 66 3 52z" fill="#fff" /><path d="M7 8 20 18V62L6 50z" fill="#191919" /><path d="M6 5 44 2 60 11 20 14z" fill="#fff" stroke="#191919" strokeWidth="2.500" /><path d="M18 17 62 13V61L18 64z" fill="#fff" stroke="#191919" strokeWidth="3" /><text x="40" y="54" textAnchor="middle" fontFamily="Liberation Serif" fontSize="43" fontWeight="700" fill="#191919">N</text><rect x="-7" y="67" width="82" height="8" rx="4" fill="#4a90f4" stroke="#777" strokeWidth="1.500" /></Art> },
  { id: "chrome", run: 1, bg: "#f2f2f2", art: <Art><ChromeArt r={29.5} /></Art> },
  { id: "slack", run: 1, bg: "#fff", art: <Art strokeWidth="9" strokeLinecap="round"><path d="M15 28H28" stroke="#5fc3ea" /><path d="M28 15h.1" stroke="#5fc3ea" /><path d="M40 15V28" stroke="#57b587" /><path d="M53 28h.1" stroke="#57b587" /><path d="M40 40H53" stroke="#e3b549" /><path d="M40 53h.1" stroke="#e3b549" /><path d="M28 40V53" stroke="#ce2d5a" /><path d="M15 40h.1" stroke="#ce2d5a" /></Art> },
  { id: "python", run: 1, free: 1, art: <Art><defs><linearGradient id="py" x1="0" y1="0" x2="1" y2="1"><stop offset="0.5" stopColor="#3b6fa5" /><stop offset="0.5" stopColor="#f3ca45" /></linearGradient></defs><path d="M-4 5 50-4 68 58 10 69z" fill="#f7f6f3" /><SiPython x="8" y="13" size={40} style={{ fill: "url(#py)" }} /><path d="M70 20 48 66 46 73 51 68 74 22z" fill="#252a36" /><path d="M58 48 48 66 46 73 51 68 61 49z" fill="#c9c4ba" /></Art> },
  { id: "tableau", run: 1, sq: 1, free: 1, art: <Art><path d="M-2-2h72v72H-2z" fill="#f6f6f6" stroke="#cfcfcf" /><g transform="translate(4 4)"><Logo mono="#4079a8" size={60} /></g></Art> },
];
const DOCK_RIGHT = [
  { id: "docs", wide: 84, free: 1, art: <Art><path d="M2 4q0-4 4-4h12l4 4h36q4 0 4 4v46q0 4-4 4H2z" fill="#4aa6e8" /><path d="M6 1H40L60 20V71H6z" fill="#fafafa" /><path d="M40 1V16q4 3 20 4z" fill="#d8d8d8" /><path d="M17 24h30M17 33h17M17 43h30M17 52h22" stroke="#bcbcbc" strokeWidth="4" /><g transform="translate(40 50) scale(0.380)"><CodeArt /></g></Art> },
  { id: "preview", free: 1, art: <Art><path d="M-6 12H74V57H-6z" fill="#f6f6f8" /><path d="M-6 12H74v4H-6z" fill="#222" /><path d="M-6 20H74v3H-6z" fill="#3c6fb5" /><path d="M-6 23H74v9H-6z" fill="#e5a765" /><circle cx="2" cy="31" r="4" fill="#eee" /><path d="M-2 38h16M-2 45h40M-2 53h14" stroke="#999" strokeWidth="1.500" /><path d="M60 44h12" stroke="#3c5fa5" strokeWidth="3" /><rect x="46" y="46" width="26" height="26" rx="6" fill="#fff" /><g transform="translate(25 25)"><ChromeArt r={11} /></g></Art> },
  { id: "trash", free: 1, art: <Art><defs><linearGradient id="bin"><stop stopColor="#5c6266" /><stop offset="0.5" stopColor="#8d9498" /><stop offset="1" stopColor="#51575b" /></linearGradient></defs><path d="M8 4 16-4 26-2 34-6 44-3 52-5 60 5 58 12H10z" fill="#e9e9e9" /><path d="M20 0l6 8M36-3l-4 10M46 0l4 8" stroke="#555" strokeWidth="2" /><path d="M44 3l6 4" stroke="#d06a2c" strokeWidth="3" /><path d="M28 1l4 5" stroke="#5fb5d8" strokeWidth="3" /><path d="M5 4q29 16 58 0L56 65q-3 6-22 6t-22-6z" fill="url(#bin)" opacity="0.9" /><path d="M5 4q29 16 58 0" stroke="#b5babd" strokeWidth="1.500" /></Art> },
];
const DockIcon = ({ item, w }) => (
  <DockItem $w={w}>
    <DockTile $bg={item.bg} $free={item.free} $sq={item.sq}>{item.art}</DockTile>
    {item.badge && <Badge>{item.badge}</Badge>}
    {(item.run || item.wide) && <Dot $w={item.wide} />}
  </DockItem>
);

/* ---------- data ---------- */
const MENUS = ["파일", "데이터", "워크시트", "대시보드", "스토리", "분석", "맵", "서식", "서버", "창", "도움말"];
const DIMENSIONS = [
  ["abc", "고객 세그먼트"], ["abc", "고객명"], ["abc", "고객번호"], ["num", "고유 Id"], ["abc", "국가"], ["abc", "배송 방법"],
  ["cal", "배송 일자"], ["abc", "시군구"], ["abc", "시도", true], ["clip", "시도"], ["abc", "제품"], ["abc", "제품"],
  ["abc", "제품"], ["abc", "제품"], ["abc", "주문"], ["cal", "주문"], ["abc", "지역"], ["abc", "측정", false, true],
];
const MEASURES = [["Nu"], ["매출"], ["수량"], ["수익"], ["할인"], ["Sup", true], ["측정", true]];
const ROWS = [
  ["2016 분기1", 66.05, "66%", "34%"], ["2016 분기2", 49.5, "50%", "50%"], ["2016 분기3", 45.9, "46%", "54%"], ["2016 분기4", 49.95, "50%", "50%"],
  ["2017 분기1", 48.65, "49%", "51%"], ["2017 분기2", 53.85, "54%", "46%"], ["2017 분기3", 43.75, "44%", "56%"], ["2017 분기4", 51.75, "52%", "48%"],
  ["2018 분기1", 53, "53%", "47%"], ["2018 분기2", 49.8, "50%", "50%"], ["2018 분기3", 53, "53%", "47%"], ["2018 분기4", 57.15, "57%", "43%"],
  ["2019 분기1", 54, "54%", "46%"], ["2019 분기2", 51.95, "52%", "48%"], ["2019 분기3", 53.4, "54%", "46%"], ["2019 분기4", 56.65, "57%", "43%"],
];
const CONTEXT = [
  ["시트에 추가"], ["필터 표시"], null, ["복제"], ["이름 바꾸기"], ["숨기기"], null, ["별칭..."], ["만들기", { sub: 1, on: 1 }], ["변환", { sub: 1 }], null,
  ["측정값으로 변환"], ["데이터 유형 변경", { sub: 1 }], ["기본 속성", { sub: 1 }], null, ["지리적 역할", { sub: 1 }], null,
  ["그룹화 기준", { sub: 1 }], ["폴더", { sub: 1, off: 1 }], ["계층", { sub: 1 }], null, ["참조 바꾸기..."], ["설명..."],
];
const CREATE = [["계산된 필드..."], ["그룹..."], ["집합...", { on: 1 }], ["매개 변수..."]];

const TypeIcon = ({ t }) => t === "abc" ? "Abc" : t === "cal" ? <Cal /> : t === "clip" ? <Clip c="#3a7e9c" w={20} h={26} /> : <Hash c={t === "measure" ? "#37996f" : "#3a7e9c"} />;
const PopupMenu = ({ items, ...pos }) => (
  <Popup {...pos}>
    {items.map((it, i) => it
      ? <PopupItem key={i} $on={it[1]?.on} $off={it[1]?.off}><span>{it[0]}</span>{it[1]?.sub && <PopupArrow />}</PopupItem>
      : <PopupRule key={i} />)}
  </Popup>
);

const TopMenu = () => (
  <MenuBar>
    <svg width="26" height="32" viewBox="0 0 384 512" fill="#f2f2f2"><FaApple width="384" height="512" size={undefined} style={{ width: 384, height: 512 }} /></svg>
    <AppName>Tableau Public</AppName>
    <Menus>{MENUS.map(m => <span key={m}>{m}</span>)}</Menus>
    <MenuStatus>
      <StatusSlot $w={38} $gap={40}><Svg w={38} h={32} stroke="none"><path d="M15 0c19 0 19 26 1 26l-9 5 0-7C-4 18-2 0 15 0z" fill="#fff" /><circle cx="26.500" cy="20" r="12" fill="#2a2a2a" /><circle cx="26.500" cy="20" r="10.500" fill="#e8553c" /><path d="M23.500 24v-8l6 8v-8" stroke="#222" strokeWidth="2.600" /></Svg></StatusSlot>
      <StatusSlot $w={28} $gap={40}><Svg w={28} h={28} stroke="none"><path d="M3 9h7L20 1V27L10 19H3z" fill="#e6e6e6" /><path d="M0 0 26 27" stroke="#2a2a2a" strokeWidth="7" /><path d="M1 0 27 27" stroke="#e6e6e6" strokeWidth="2.400" /></Svg></StatusSlot>
      <Percent $w={47} $gap={10}>90%</Percent>
      <StatusSlot $w={51} $gap={40}><Svg w={51} h={24} stroke="none"><rect x="1" y="1" width="44" height="22" rx="7" stroke="#8c8c8c" strokeWidth="2" /><rect x="4" y="4" width="34" height="16" rx="4" fill="#ececec" /><path d="M47.500 8q3 4 0 8z" fill="#8c8c8c" /></Svg></StatusSlot>
      <InputSource $w={44} $gap={43}>한</InputSource>
      <StatusSlot $w={36} $gap={37}><Svg w={36} h={26} stroke="#f2f2f2" strokeWidth="4.500"><path d="M2 10Q18-5.500 34 10M8 16Q18 6.500 28 16" /><path d="M12.500 20.500Q18 15 23.500 20.500L18 26z" fill="#f2f2f2" stroke="none" /></Svg></StatusSlot>
      <StatusSlot $w={27} $gap={37}><Svg w={27} h={27} stroke="#f2f2f2" strokeWidth="3"><circle cx="11" cy="11" r="9.500" /><path d="M18 18l8 8" strokeLinecap="round" /></Svg></StatusSlot>
      <StatusSlot $w={29} $gap={35}><Svg w={29} h={28} stroke="none"><rect x="1.500" y="1.500" width="26" height="10" rx="5" stroke="#f2f2f2" strokeWidth="2.600" /><circle cx="7" cy="6.500" r="3.500" fill="#f2f2f2" /><rect x="0" y="15" width="29" height="13" rx="6.500" fill="#f2f2f2" /><circle cx="22.500" cy="21.500" r="3.800" fill="#2a2a2a" /></Svg></StatusSlot>
      <Clock>11월 18일 (토) 오후 4:26</Clock>
    </MenuStatus>
  </MenuBar>
);

const ToolStrip = () => (
  <Toolbar>
    <Tool $w={32}><Logo /></Tool><ToolRule $gap={30} />
    <Tool $gap={26} $w={36}><Arrow /></Tool><Tool $gap={28} $w={36}><Arrow flip /></Tool>
    <Tool $gap={22} $w={40}><Redo /></Tool><CaretShape $gap={16} />
    <Tool $gap={22} $w={32}><Save /></Tool><Tool $gap={34} $w={28}><DbPlus /></Tool><ToolRule $gap={32} />
    <Tool $gap={21} $w={38}><NewSheet /></Tool><CaretShape $gap={17} />
    <Tool $gap={20} $w={36}><DupSheet /></Tool><Tool $gap={24} $w={36}><ClearSheet /></Tool><CaretShape $gap={18} /><ToolRule $gap={20} />
    <Tool $gap={26} $w={36}><Swap /></Tool><Tool $gap={29} $w={36}><Sort /></Tool><Tool $gap={27} $w={37}><Sort desc /></Tool><ToolRule $gap={27} />
    <Tool $gap={32} $w={28}><Pen /></Tool><CaretShape $gap={14} />
    <Tool $gap={25} $w={24}><Clip /></Tool><CaretShape $gap={20} $c="#b5b5b5" />
    <ToolActive $gap={11} $w={60}><TBox c="#333" /></ToolActive>
    <Tool $gap={21} $w={26}><Pin /></Tool>
    <FitSelect><FitText>전체 보기</FitText><SelectArrow $w={35}><CaretShape $s={7} $h={8} $c="#222" /></SelectArrow></FitSelect>
    <ToolRule $gap={30} /><Tool $gap={23} $w={40}><Cards3 /></Tool><CaretShape $gap={11} />
    <Tool $gap={23} $w={35}><Present /></Tool><ToolRule $gap={28} />
    <ShowMe><ShowMeIcon />표현 방식</ShowMe>
  </Toolbar>
);

const DataPane = () => (
  <Sidebar>
    <PaneTabs>
      <DataTab>데이터</DataTab>
      <AnalyticsTab>분석<Svg w={12} h={20} strokeWidth="2.400"><path d="M11 1 1.500 10 11 19" /></Svg></AnalyticsTab>
    </PaneTabs>
    <Source><SourceIcon />Superstore KR(2,3강_Su...</Source>
    <SearchRow>
      <SearchBox>검색<Lens /></SearchBox>
      <Tool $gap={8} $w={26}><Funnel /></Tool><SearchRule />
      <Tool $w={24}><ListGrid /></Tool><CaretShape $gap={19} $s={7} $h={8} />
    </SearchRow>
    <SchemaHead>테이블</SchemaHead>
    {DIMENSIONS.map(([t, n, on, it], i) => <FieldRow key={i}><TypeCell><TypeIcon t={t} /></TypeCell><FieldName $on={on} $italic={it}>{n}</FieldName></FieldRow>)}
    <FieldRule />
    {MEASURES.map(([n, it]) => <FieldRow key={n}><TypeCell><TypeIcon t="measure" /></TypeCell><FieldName $italic={it}>{n}</FieldName></FieldRow>)}
  </Sidebar>
);

const MARKS = [["색상", <Dots4 />], ["크기", <SizeIcon />], ["레이블", <TBox w={28} h={24} f={18} />], ["세부 정보", <Detail />], ["도구 설명", <Tip />]];
const CardColumn = () => (
  <Cards>
    <Card $h={124}><CardTitle>페이지</CardTitle></Card>
    <Card $h={156}><CardTitle>필터</CardTitle></Card>
    <Card $h={482}>
      <CardTitle>마크</CardTitle>
      <MarkSelect>
        <Svg w={18} h={18} strokeWidth="1.600"><rect x="1" y="7" width="3.500" height="10" rx="1" /><rect x="7.500" y="10" width="3.500" height="7" rx="1" /><rect x="14" y="1" width="3.500" height="16" rx="1" /></Svg>
        막대<SelectArrow><CaretShape $s={7} $h={8} /></SelectArrow>
      </MarkSelect>
      <MarkGrid>{MARKS.map(([n, ic]) => <MarkButton key={n}><MarkIconBox>{ic}</MarkIconBox>{n}</MarkButton>)}</MarkGrid>
      <MarkPills>
        <MarkPillRow><Dots4 /><Pill $w={222} $c={BLUE}>시도 (그룹)</Pill></MarkPillRow>
        <MarkPillRow><TBox w={28} h={24} f={18} /><Pill $w={222} $c={GREEN}>합계(매출)<Delta /></Pill></MarkPillRow>
      </MarkPills>
    </Card>
  </Cards>
);

const Chart = () => (
  <View>
    <SheetTitle>그룹</SheetTitle>
    <RowHead>주문 일자의 분..</RowHead>
    <ChartArea>
      <RowLabels>{ROWS.map(r => <RowLabel key={r[0]}>{r[0]}</RowLabel>)}</RowLabels>
      <Plot>
        <Gridlines />
        <Bars>
          {ROWS.map(([n, v, a, b]) => (
            <BarRow key={n}>
              <Bar style={{ width: `${v}%` }}>{a}</Bar>
              <Bar $hi style={{ width: `${100 - v}%` }}>{b}</Bar>
            </BarRow>
          ))}
        </Bars>
        <RefLine /><RefLabel>50%</RefLabel>
      </Plot>
    </ChartArea>
    <Ticks />
    <AxisLabels>{Array.from({ length: 11 }, (_, i) => <AxisLabel key={i} $shift={i ? 0 : 44}>{i * 10}%</AxisLabel>)}</AxisLabels>
    <AxisTitle>매출에 대한 총계 %</AxisTitle>
  </View>
);

const Worksheet = () => (
  <Main>
    <Shelf><ShelfLabel><ShelfIcon><ColsIcon /></ShelfIcon>열</ShelfLabel><Pill $w={296} $c={GREEN}>합계(매출)<Delta /></Pill></Shelf>
    <Shelf><ShelfLabel><ShelfIcon><RowsIcon /></ShelfIcon>행</ShelfLabel><Pill $w={296} $c={BLUE}><PillIcon><Expand /></PillIcon>분기(주문 일자)</Pill></Shelf>
    <Stage>
      <Chart />
      <Legend>
        <LegendHead>시도 (그룹)</LegendHead>
        <LegendItem><Swatch $c="#fffd00" /><LegendName>수도권</LegendName></LegendItem>
        <LegendItem><Swatch $c="#fff" /><LegendName>기타</LegendName></LegendItem>
      </Legend>
    </Stage>
  </Main>
);

const NAV = ["M1 0v14M12 0v14L4.500 7z", "M10 0v14L2.500 7z", "M2 0v14L9.500 7z", "M11 0v14M0 0v14L7.500 7z"];
const Footer = () => (
  <>
    <SheetTabs>
      <SourceTab><Svg w={16} h={22}><ellipse cx="8" cy="5" rx="7" ry="4" /><path d="M1 5v12c0 5 14 5 14 0V5" /></Svg>데이터 원본</SourceTab>
      <SheetTab>그룹</SheetTab>
      <NewTab><Svg w={30} h={28}><path d="M14 21H2q-1 0-1-1V2q0-1 1-1h18q1 0 1 1v10M6 16v-4M11 16V6M16 16V9" /><Plus x={22} y={21} /></Svg></NewTab>
      <NewTab><Svg w={30} h={28}><path d="M14 21H2q-1 0-1-1V2q0-1 1-1h18q1 0 1 1v10M11 1v20M1 11h20" /><Plus x={22} y={21} /></Svg></NewTab>
      <NewTab><Svg w={30} h={28}><path d="M11 6 1 1v17l10 5M11 6v17M11 6 21 1v11" /><Plus x={22} y={21} /></Svg></NewTab>
    </SheetTabs>
    <StatusBar>
      <StatusText $w={113}>32개 마크</StatusText><StatusText $w={177} $ls={0.65}>행 16개 x 열 1개</StatusText><StatusText $w={400} $ls={0.3}>합계(매출)에 대한 총계 %: 1,600.00%</StatusText>
      <StatusCell $first $w={254} /><StatusCell $w={54} /><StatusCell $w={54} /><StatusCell $w={94} />
      <StatusCell $w={142} $pad={16}>{NAV.map(d => <Svg key={d} w={12} h={14} stroke="#a2a2a2" fill="#a2a2a2" strokeWidth="1"><path d={d} /></Svg>)}</StatusCell>
      <StatusCell $w={154} $pad={0}>
        <Svg w={151} h={22} stroke="none">
          {[16, 24, 32].map(x => [0, 8, 16].map(y => <rect key={x + "" + y} x={x} y={y} width="6" height="6" fill="#a2a2a2" />))}
          <rect x="58" y="0" width="22" height="14" fill="#a8a8a8" />{[58, 66, 74].map(x => <rect key={x} x={x} y="16" width="6" height="6" fill="#a2a2a2" />)}
          <rect x="100" y="0" width="22" height="22" fill="#606060" />
        </Svg>
      </StatusCell>
    </StatusBar>
  </>
);

export default function App() {
  return (
    <Desktop>
      <Global />
      <TopMenu />
      <AppWindow>
        <TitleBar>
          <Light $c="#ed6a5e" $b="#d8574c" /><Light $c="#f5bf4f" $b="#dca53c" /><Light $c="#62c554" $b="#50ab43" />
          <WindowTitle>Tableau Public - 문서2</WindowTitle>
        </TitleBar>
        <ToolStrip />
        <Body><DataPane /><CardColumn /><Worksheet /></Body>
        <Footer />
        <PopupMenu items={CONTEXT} $x={126} $y={748} $w={306} />
        <PopupMenu items={CREATE} $x={432} $y={1012} $w={226} />
      </AppWindow>
      <Dock>
        {DOCK_LEFT.map(i => <DockIcon key={i.id} item={i} />)}
        <DockRule $l={20} $r={17} />
        {DOCK_MID.map(i => <DockIcon key={i.id} item={i} w={87.7} />)}
        <DockRule $l={17} $r={19} />
        {DOCK_RIGHT.map(i => <DockIcon key={i.id} item={i} w={88} />)}
      </Dock>
    </Desktop>
  );
}
